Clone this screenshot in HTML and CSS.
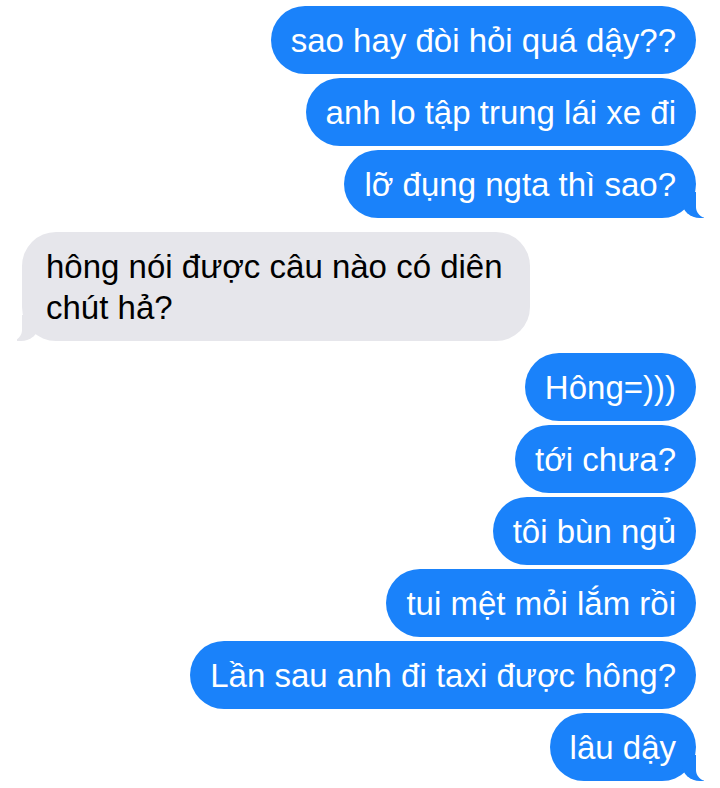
FILE: index.html
```html
<!DOCTYPE html>
<html lang="vi">
<head>
  <meta charset="UTF-8" />
  <meta name="viewport" content="width=device-width, initial-scale=1.0" />
  <title>Tin nhắn</title>
  <link rel="stylesheet" href="styles.css">
</head>
<body>

  <section class="thread">
    <div class="bubble sent">sao hay đòi hỏi quá dậy??</div>
    <div class="bubble sent">anh lo tập trung lái xe đi</div>
    <div class="bubble sent tail">lỡ đụng ngta thì sao?</div>

    <div class="bubble received tail">hông nói được câu nào có diên chút hả?</div>

    <div class="bubble sent">Hông=)))</div>
    <div class="bubble sent">tới chưa?</div>
    <div class="bubble sent">tôi bùn ngủ</div>
    <div class="bubble sent">tui mệt mỏi lắm rồi</div>
    <div class="bubble sent">Lần sau anh đi taxi được hông?</div>
    <div class="bubble sent tail">lâu dậy</div>
  </section>

</body>
</html>
```

FILE: styles.css
```css
* {
  margin: 0;
  padding: 0;
  box-sizing: border-box;
}

body {
  font-family: 'Liberation Sans', Arial, sans-serif;
  background-color: #ffffff;
  overflow: hidden;
}

.thread {
  display: flex;
  flex-direction: column;
  gap: 4px;
  padding: 6px 24px 0 22px;
}

.bubble {
  position: relative;
  font-size: 33px;
  line-height: 41px;
  padding: 14px 20px 13px;
  border-radius: 34px;
  max-width: 508px;
}

.sent {
  align-self: flex-end;
  background: #1a82fa;
  color: #ffffff;
}

.received {
  align-self: flex-start;
  background: #e6e6eb;
  color: #000000;
  padding: 14px 24px 13px;
  width: 508px;
  margin: 10px 0 8px;
}

/* tail bits */
.tail::before,
.tail::after {
  content: "";
  position: absolute;
  bottom: 0;
  height: 26px;
}

.sent.tail::before {
  right: -8px;
  width: 22px;
  background: #1a82fa;
  border-bottom-left-radius: 18px 16px;
}

.sent.tail::after {
  right: -26px;
  width: 26px;
  background: #ffffff;
  border-bottom-left-radius: 11px;
}

.received.tail::before {
  left: -5px;
  width: 22px;
  background: #e6e6eb;
  border-bottom-right-radius: 18px 16px;
}

.received.tail::after {
  left: -26px;
  width: 26px;
  background: #ffffff;
  border-bottom-right-radius: 11px;
}
```
